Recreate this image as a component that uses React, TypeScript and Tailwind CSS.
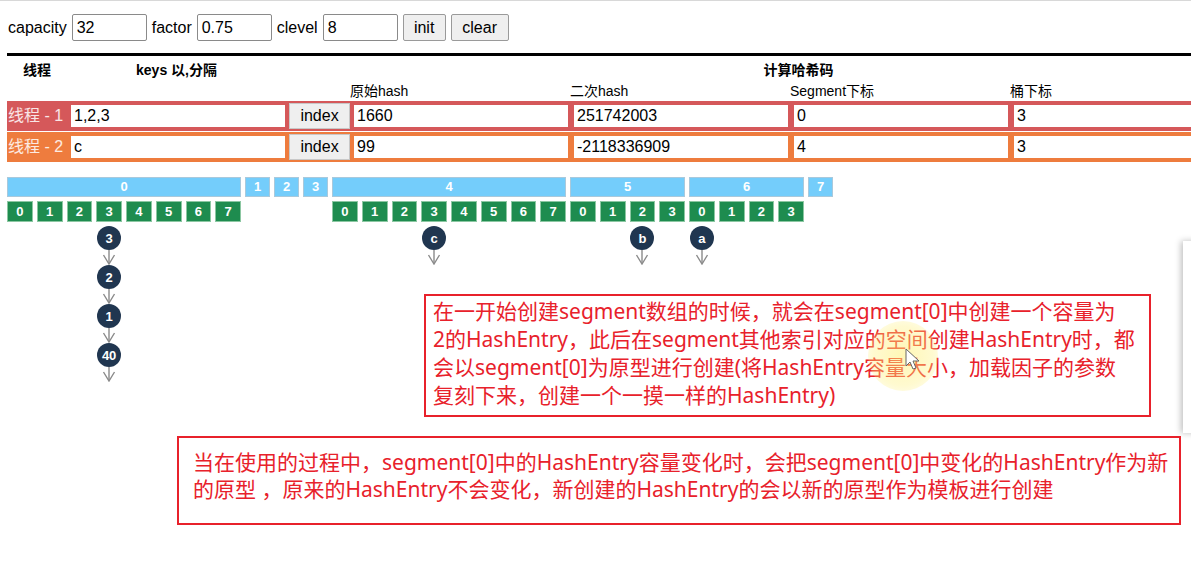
import React from 'react';

type Seg = { id: number; cells: number; chains?: Record<number, string[]> };

const segments: Seg[] = [
  { id: 0, cells: 8, chains: { 3: ['3', '2', '1', '40'] } },
  { id: 1, cells: 0 },
  { id: 2, cells: 0 },
  { id: 3, cells: 0 },
  { id: 4, cells: 8, chains: { 3: ['c'] } },
  { id: 5, cells: 4, chains: { 2: ['b'] } },
  { id: 6, cells: 4, chains: { 0: ['a'] } },
  { id: 7, cells: 0 },
];

const rows = [
  { name: '线程 - 1', keys: '1,2,3', hash: '1660', hash2: '251742003', seg: '0', bucket: '3', bg: 'bg-[#d5585a]', border: 'border-[#d5585a]' },
  { name: '线程 - 2', keys: 'c', hash: '99', hash2: '-2118336909', seg: '4', bucket: '3', bg: 'bg-[#ee7c3e]', border: 'border-[#ee7c3e]' },
];

const Arrow = () => (
  <svg width="14" height="15" viewBox="0 0 14 15" className="block">
    <line x1="7" y1="0" x2="7" y2="13" stroke="#8a8a8a" strokeWidth="1.4" />
    <polyline points="1.5,5 7,14 12.5,5" fill="none" stroke="#8a8a8a" strokeWidth="1.4" />
  </svg>
);

const Node = ({ label }: { label: string }) => (
  <div className="flex flex-col items-center">
    <div className="w-[24px] h-[24px] rounded-full bg-[#203650] text-white text-[13px] font-bold flex items-center justify-center leading-none">
      {label}
    </div>
    <Arrow />
  </div>
);

const Field = ({ value, border, w }: { value: string; border: string; w: string }) => (
  <div className={`${w} h-[26px] bg-white border-2 ${border} px-[3px] flex items-center text-[16px] text-black shrink-0`}>
    {value}
  </div>
);

export default function App() {
  return (
    <div className="relative w-[1191px] h-[571px] overflow-hidden bg-white font-['Liberation_Sans','Noto_Sans_CJK_SC',sans-serif] text-black border-t border-[#d8d8d8]">
      {/* controls */}
      <div className="flex items-center gap-[5px] pl-[8px] pt-[13px] text-[16px]">
        <span>capacity</span>
        <div className="w-[75px] h-[27px] border border-[#8a8a8a] rounded-[2px] px-[4px] flex items-center">32</div>
        <span>factor</span>
        <div className="w-[75px] h-[27px] border border-[#8a8a8a] rounded-[2px] px-[4px] flex items-center">0.75</div>
        <span>clevel</span>
        <div className="w-[75px] h-[27px] border border-[#8a8a8a] rounded-[2px] px-[4px] flex items-center">8</div>
        <button className="w-[43px] h-[27px] border border-[#9a9a9a] rounded-[2px] bg-[#efefef]">init</button>
        <button className="w-[58px] h-[27px] border border-[#9a9a9a] rounded-[2px] bg-[#efefef]">clear</button>
      </div>

      <div className="ml-[7px] mt-[12px] h-[3px] bg-black w-[1200px]" />

      {/* table headers */}
      <div className="ml-[7px] mt-[3px] w-[1240px] text-[14px]">
        <div className="flex h-[22px] items-center font-bold">
          <div className="w-[60px] text-center">线程</div>
          <div className="w-[219px] text-center">keys 以,分隔</div>
          <div className="w-[64px]" />
          <div className="flex-1 text-center">计算哈希码</div>
        </div>
        <div className="flex h-[20px] items-center">
          <div className="w-[343px]" />
          <div className="w-[220px]">原始hash</div>
          <div className="w-[220px]">二次hash</div>
          <div className="w-[220px]">Segment下标</div>
          <div className="w-[220px]">桶下标</div>
        </div>
        <div className="flex flex-col gap-[1px]">
          {rows.map((r) => (
            <div key={r.name} className={`flex items-center h-[30px] ${r.bg} gap-[2px] pr-[2px]`}>
              <div className="w-[60px] text-[16px] text-white/85 pl-[1px] whitespace-nowrap">{r.name}</div>
              <Field value={r.keys} border={r.border} w="w-[218px]" />
              <button className="w-[61px] h-[26px] bg-[#efefef] border border-[#c8c8c8] text-[16px] text-black shrink-0">index</button>
              <Field value={r.hash} border={r.border} w="w-[218px]" />
              <Field value={r.hash2} border={r.border} w="w-[218px]" />
              <Field value={r.seg} border={r.border} w="w-[218px]" />
              <Field value={r.bucket} border={r.border} w="w-[218px]" />
            </div>
          ))}
        </div>
      </div>

      {/* segments */}
      <div className="flex items-start gap-[4px] ml-[7px] mt-[15px] text-white font-bold text-[13px]">
        {segments.map((s) => (
          <div key={s.id} className="flex flex-col gap-[4px]">
            <div className="h-[20px] bg-[#74cdfb] border border-[#a9c9dc] flex items-center justify-center">{s.id}</div>
            {s.cells > 0 && (
              <div className="flex gap-[4px]">
                {Array.from({ length: s.cells }).map((_, i) => (
                  <div key={i} className="relative w-[25.75px]">
                    <div className="h-[21px] bg-[#1e8c4f] border border-[#8cc7a2] flex items-center justify-center">{i}</div>
                    {s.chains?.[i] && (
                      <div className="absolute left-1/2 -translate-x-1/2 top-[25px] flex flex-col items-center">
                        {s.chains[i].map((n) => (
                          <Node key={n} label={n} />
                        ))}
                      </div>
                    )}
                  </div>
                ))}
              </div>
            )}
            {s.cells === 0 && <div className="w-[25px]" />}
          </div>
        ))}
      </div>

      {/* notes */}
      <div className="ml-[424px] mt-[72px] w-[727px] border-2 border-[#e8212b] pl-[7px] pt-[1px] pb-[6px] text-[#e8212b] text-[21px] leading-[28px] font-['Noto_Sans','Noto_Sans_CJK_SC',sans-serif] whitespace-nowrap">
        <div>在一开始创建segment数组的时候，就会在segment[0]中创建一个容量为</div>
        <div>2的HashEntry，此后在segment其他索引对应的空间创建HashEntry时，都</div>
        <div>会以segment[0]为原型进行创建(将HashEntry容量大小，加载因子的参数</div>
        <div>复刻下来，创建一个一摸一样的HashEntry)</div>
      </div>

      <div className="ml-[177px] mt-[19px] w-[1004px] h-[89px] border-2 border-[#e8212b] pl-[14px] pt-[11px] text-[#e8212b] text-[21px] leading-[27px] font-['Noto_Sans','Noto_Sans_CJK_SC',sans-serif] whitespace-nowrap">
        <div>当在使用的过程中，segment[0]中的HashEntry容量变化时，会把segment[0]中变化的HashEntry作为新</div>
        <div>的原型 ，原来的HashEntry不会变化，新创建的HashEntry的会以新的原型作为模板进行创建</div>
      </div>

      {/* cursor highlight */}
      <div className="absolute left-[868px] top-[320px] w-[70px] h-[70px] rounded-full bg-[radial-gradient(circle,rgba(255,240,120,0.55)_0%,rgba(255,240,120,0.35)_60%,rgba(255,240,120,0)_100%)] pointer-events-none" />
      <svg className="absolute left-[905px] top-[347px]" width="16" height="24" viewBox="0 0 16 24">
        <path d="M1 1 L1 18 L5 14 L8 21 L11 20 L8 13 L14 13 Z" fill="white" stroke="#666" strokeWidth="1" />
      </svg>

      {/* side panel edge */}
      <div className="absolute left-[1183px] top-[240px] w-[20px] h-[192px] bg-white shadow-[-2px_0_6px_rgba(0,0,0,0.25)]" />
    </div>
  );
}
